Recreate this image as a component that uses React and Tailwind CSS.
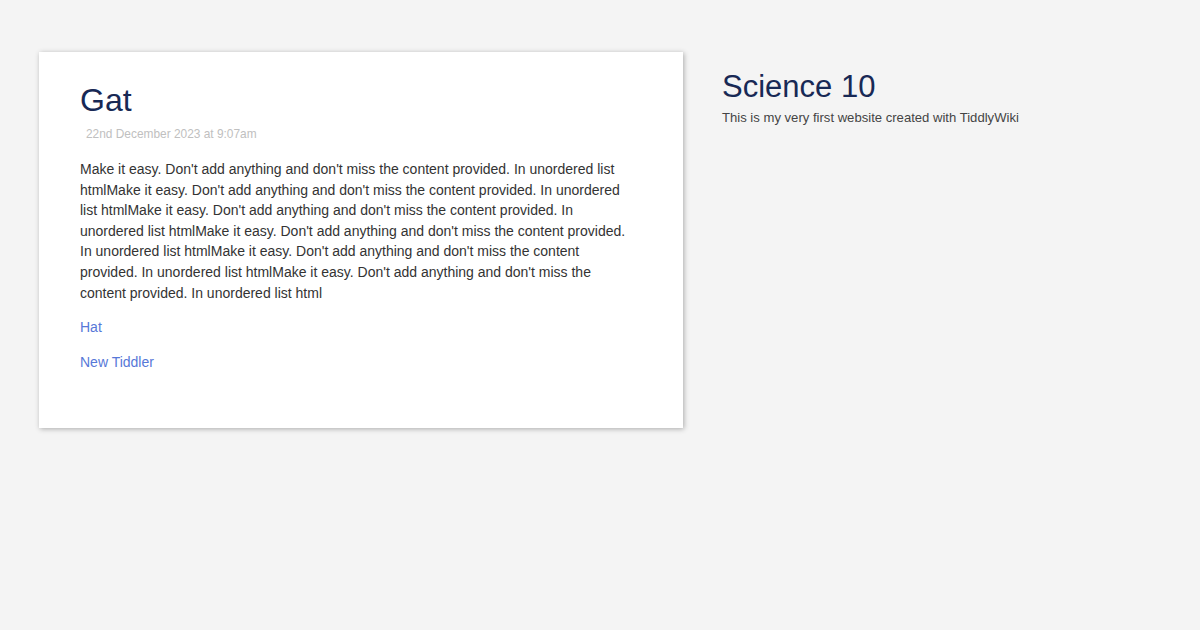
const body =
  "Make it easy. Don't add anything and don't miss the content provided. In unordered list htmlMake it easy. Don't add anything and don't miss the content provided. In unordered list htmlMake it easy. Don't add anything and don't miss the content provided. In unordered list htmlMake it easy. Don't add anything and don't miss the content provided. In unordered list htmlMake it easy. Don't add anything and don't miss the content provided. In unordered list htmlMake it easy. Don't add anything and don't miss the content provided. In unordered list html";

const App = () => {
  return (
    <div
      className="min-h-screen w-full bg-[#f4f4f4] text-[#333] text-[14px]"
      style={{ fontFamily: '"Liberation Sans", Arial, sans-serif' }}
    >
      <div className="flex items-start pt-[52px] pl-[39px] gap-[39px]">
        {/* Story river */}
        <div className="w-[644px] bg-white shadow-[1px_1px_5px_rgba(0,0,0,0.3)] pt-[28px] px-[41px] pb-[55px]">
          <h2 className="text-[32px] leading-[1.25] text-[#182955] font-normal">Gat</h2>
          <div className="text-[11.9px] text-[#c0c0c0] pl-[6px] pt-[4px] leading-[20px]">
            22nd December 2023 at 9:07am
          </div>
          <div className="mt-[15px] leading-[20.6px] w-[560px] text-[#333]">
            <p>{body}</p>
            <p className="mt-[13.5px]">
              <a className="text-[#5778d8] cursor-pointer">Hat</a>
            </p>
            <p className="mt-[15px]">
              <a className="text-[#5778d8] cursor-pointer">New Tiddler</a>
            </p>
          </div>
        </div>

        {/* Sidebar */}
        <div className="pt-[16px]">
          <h1 className="text-[31px] leading-[1.2] text-[#182955] font-normal">Science 10</h1>
          <div className="text-[13.1px] text-[#444] leading-[18px] mt-[4px]">
            This is my very first website created with TiddlyWiki
          </div>
        </div>
      </div>
    </div>
  );
};

export default App;
